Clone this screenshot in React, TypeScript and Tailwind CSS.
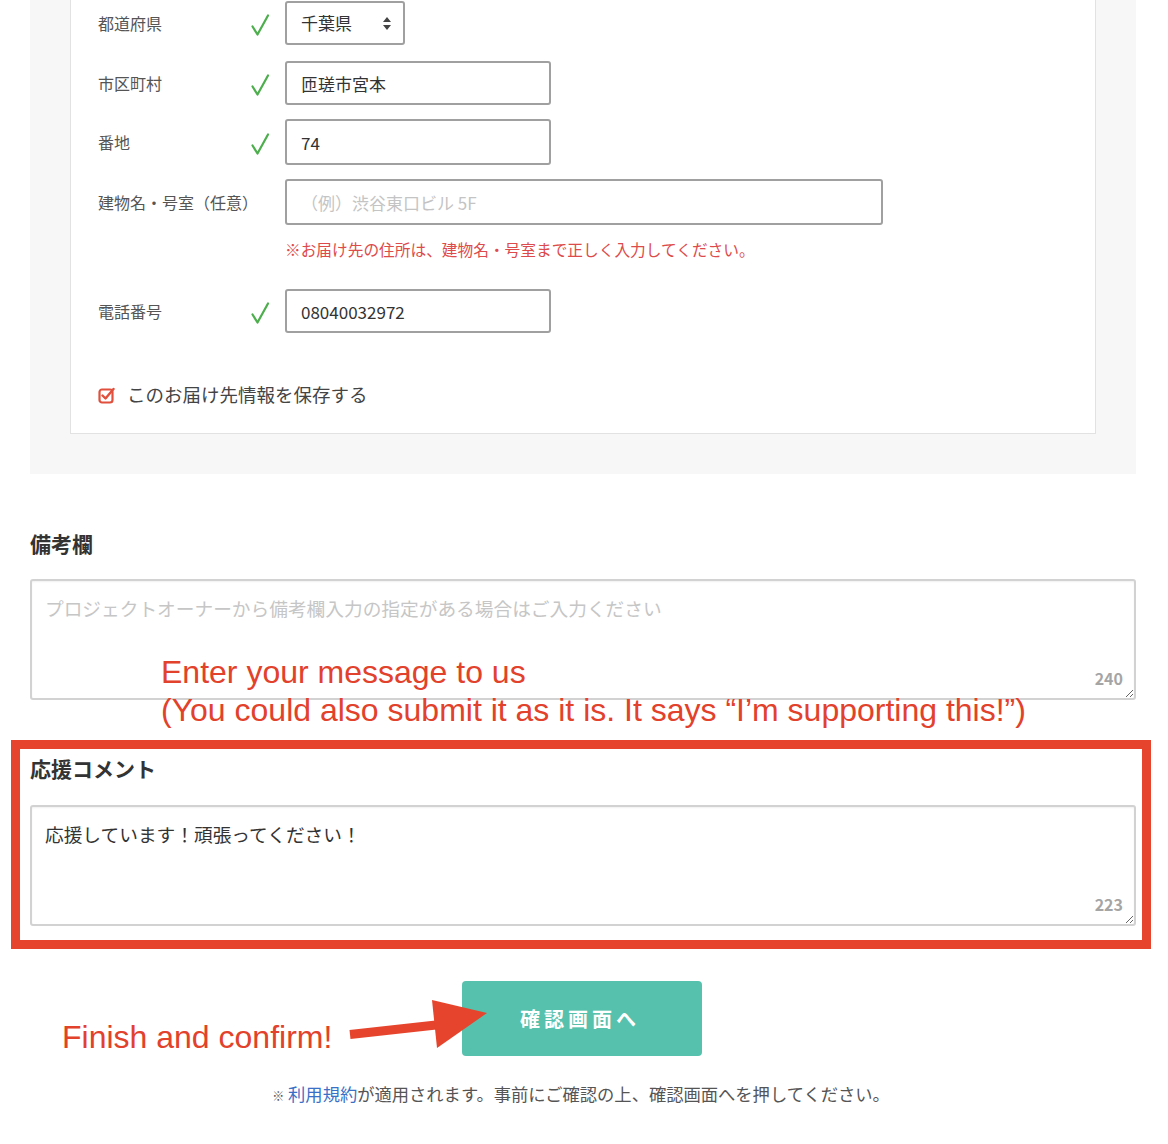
import React from 'react';

const jp = { fontFamily: '"Noto Sans CJK JP", "Noto Sans", sans-serif' };
const en = { fontFamily: '"Liberation Sans", Arial, sans-serif' };

const Check = () => (
  <svg width="20" height="24" viewBox="0 0 20 24" className="text-[#4cae4c]">
    <path d="M2.5 13.5 L7.5 21.5 L18 2.5" fill="none" stroke="currentColor" strokeWidth="2.2" strokeLinecap="round" strokeLinejoin="round" />
  </svg>
);

const Row: React.FC<{ label: string; check?: boolean; className?: string; children: React.ReactNode }> = ({ label, check, className, children }) => (
  <div className={`flex items-center ${className ?? ''}`}>
    <div className="w-[152px] shrink-0 whitespace-nowrap text-[16px] text-[#555]">{label}</div>
    <div className="w-[35px] shrink-0 flex items-center pt-[4px]">{check && <Check />}</div>
    {children}
  </div>
);

const inputCls = 'border-2 border-[#a0a0a0] rounded-[3px] bg-white px-[14px] text-[17px] text-[#333] outline-none';

const Counter: React.FC<{ n: number }> = ({ n }) => (
  <span className="absolute right-[13px] bottom-[10px] text-[16px] font-bold text-[#a5a5a5] pointer-events-none">{n}</span>
);

const areaCls =
  'block w-full h-[121px] border-2 border-[#d2d2d2] rounded-[3px] px-[13px] py-[13px] text-[18.7px] leading-[28px] text-[#333] outline-none shadow-[inset_0_1px_2px_rgba(0,0,0,0.06)]';

const App: React.FC = () => {
  return (
    <div className="relative w-[1168px] h-[1144px] bg-white overflow-hidden" style={jp}>
      <div className="ml-[30px] w-[1106px]">
        {/* address form */}
        <div className="bg-[#f7f7f8] px-[40px] pb-[40px]">
          <div className="bg-white border border-t-0 border-[#e2e2e2] pl-[27px] pt-[1px] pb-[26px]">
            <Row label="都道府県" check>
              <div className={`${inputCls} h-[44px] w-[120px] flex items-center justify-between pr-[12px]`}>
                <span>千葉県</span>
                <svg width="8" height="13" viewBox="0 0 8 13" className="text-[#444]">
                  <path d="M4 0 L8 5 L0 5 Z M0 8 L8 8 L4 13 Z" fill="currentColor" />
                </svg>
              </div>
            </Row>
            <Row label="市区町村" check className="mt-[16px]">
              <input readOnly value="匝瑳市宮本" className={`${inputCls} h-[44px] w-[266px]`} style={jp} />
            </Row>
            <Row label="番地" check className="mt-[14px]">
              <input readOnly value="74" className={`${inputCls} h-[46px] w-[266px]`} style={jp} />
            </Row>
            <Row label="建物名・号室（任意）" className="mt-[14px]">
              <input
                readOnly
                placeholder="（例）渋谷東口ビル 5F"
                className={`${inputCls} h-[46px] w-[598px] placeholder:text-[#c4c4c4]`}
                style={jp}
              />
            </Row>
            <div className="mt-[14px] pl-[187px] text-[15.7px] leading-[22px] text-[#dd4b4b]">
              ※お届け先の住所は、建物名・号室まで正しく入力してください。
            </div>
            <Row label="電話番号" check className="mt-[28px]">
              <input readOnly value="08040032972" className={`${inputCls} h-[44px] w-[266px]`} style={jp} />
            </Row>
            <div className="mt-[50px] h-[24px] flex items-center gap-[12px]">
              <svg width="17" height="17" viewBox="0 0 17 17" className="text-[#e0503c]">
                <rect x="1.5" y="2.5" width="13" height="13" rx="2.5" fill="none" stroke="currentColor" strokeWidth="2.2" />
                <path d="M4.5 8.5 L7.5 11.5 L15.5 2" fill="none" stroke="currentColor" strokeWidth="2.4" strokeLinecap="round" strokeLinejoin="round" />
              </svg>
              <span className="text-[18.5px] text-[#444]">このお届け先情報を保存する</span>
            </div>
          </div>
        </div>

        {/* remarks */}
        <h2 className="mt-[54px] text-[21px] leading-[30px] font-bold text-[#333]">備考欄</h2>
        <div className="relative mt-[21px]">
          <textarea
            readOnly
            placeholder="プロジェクトオーナーから備考欄入力の指定がある場合はご入力ください"
            className={`${areaCls} placeholder:text-[#c6c6c6]`}
            style={jp}
          />
          <Counter n={240} />
        </div>

        {/* support comment */}
        <div className="mt-[40px] -ml-[19px] -mr-[15px] border-[9px] border-[#e6442c] pl-[10px] pr-[6px] pt-[4px] pb-[14px]">
          <h2 className="text-[21px] leading-[30px] font-bold text-[#333]">応援コメント</h2>
          <div className="relative mt-[22px]">
            <textarea readOnly value="応援しています！頑張ってください！" className={areaCls} style={jp} />
            <Counter n={223} />
          </div>
        </div>

        {/* submit */}
        <div className="mt-[32px] flex justify-center">
          <button className="-ml-[2px] w-[240px] h-[75px] rounded-[4px] bg-[#56c1ad] text-white text-[20px] font-bold tracking-[4px] pr-[4px]">
            確認画面へ
          </button>
        </div>
        <p className="mt-[26px] text-center text-[17.3px] leading-[24px] text-[#555] pr-[4px]">
          <span className="text-[12px]">※</span> <a className="text-[#3a70c6]">利用規約</a>が適用されます。事前にご確認の上、確認画面へを押してください。
        </p>
      </div>

      {/* annotations */}
      <div className="absolute left-[161px] top-[653px] text-[32px] leading-[38px] text-[#e2412b]" style={en}>
        <div>Enter your message to us</div>
        <div>(You could also submit it as it is. It says “I’m supporting this!”)</div>
      </div>
      <div className="absolute left-[62px] top-[1018px] text-[32px] leading-[38px] text-[#e2412b]" style={en}>
        Finish and confirm!
      </div>
      <svg className="absolute left-[340px] top-[995px]" width="155" height="60" viewBox="0 0 155 60">
        <polygon points="9.5,35 95.5,25.5 96.5,34.5 10.5,44" fill="#e6442c" />
        <polygon points="92,5 97,53 147,18" fill="#e6442c" />
      </svg>
    </div>
  );
};

export default App;
